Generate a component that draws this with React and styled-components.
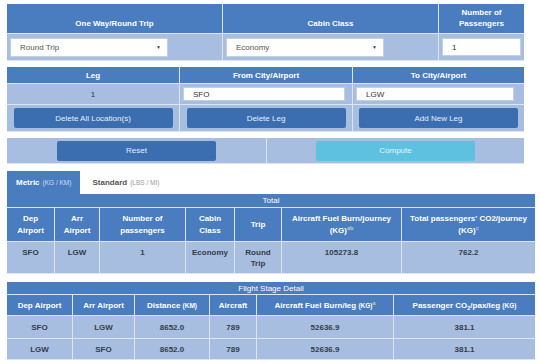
import React from 'react'
import styled, { createGlobalStyle } from 'styled-components'

const C = {
  head: '#4a7cc0',
  row: '#a8bee1',
  btn: '#3b6eb0',
  line: '#dbe5f3',
  cyan: '#5fc1e0',
  sup: '#b8e07c',
}

const GlobalStyle = createGlobalStyle`
  * { box-sizing: border-box; }
  body {
    margin: 0;
    background: #fff;
    font-family: "Liberation Sans", Arial, sans-serif;
    font-size: 8px;
    color: #333;
  }
`

const Page = styled.div`
  padding: 4px 0 0 7px;
`

const Panel = styled.div`
  width: ${({ $w }) => $w || 517}px;
  margin-bottom: ${({ $mb }) => $mb || 0}px;
`

const Row = styled.div`
  display: grid;
  grid-template-columns: ${({ $cols }) => $cols};
  height: ${({ $h }) => $h}px;
  background: ${({ $head }) => ($head ? C.head : C.row)};
  border-bottom: 1px solid ${C.line};
`

const Cell = styled.div`
  display: flex;
  align-items: ${({ $align }) => $align || 'center'};
  justify-content: ${({ $justify }) => $justify || 'center'};
  text-align: center;
  padding: ${({ $pad }) => $pad || '0 3px'};
  border-left: 1px solid ${C.line};
  line-height: ${({ $lh }) => $lh || 11}px;
  &:first-child { border-left: none; }
`

const HeadCell = styled(Cell)`
  color: #fff;
  font-weight: bold;
`

const DataCell = styled(Cell)`
  color: #333c4a;
  font-weight: bold;
`

const Bar = styled.div`
  height: ${({ $h }) => $h}px;
  background: ${C.head};
  color: #fff;
  text-align: center;
  line-height: ${({ $h }) => $h}px;
  border-bottom: 1px solid ${C.line};
`

const FakeSelect = styled.div`
  width: 158px;
  height: 19px;
  background: #fff;
  border: 1px solid #c4cfdf;
  display: flex;
  align-items: center;
  justify-content: space-between;
  padding: 0 6px 0 9px;
  color: #555;
`

const Caret = styled.span`
  font-size: 5px;
  color: #444;
`

const Field = styled.div`
  width: ${({ $w }) => $w}px;
  height: ${({ $h }) => $h || 18}px;
  background: #fff;
  border: 1px solid #c4cfdf;
  display: flex;
  align-items: center;
  padding-left: 9px;
  color: #333;
`

const Button = styled.div`
  width: 159px;
  height: 20px;
  border-radius: 2px;
  background: ${({ $cyan }) => ($cyan ? C.cyan : C.btn)};
  color: ${({ $cyan }) => ($cyan ? '#e4f5fb' : '#e8eef7')};
  display: flex;
  align-items: center;
  justify-content: center;
`

const Tabs = styled.div`
  display: flex;
  align-items: stretch;
  height: 23px;
  gap: 12px;
`

const Tab = styled.div`
  display: flex;
  align-items: center;
  padding: 0 9px;
  background: ${({ $active }) => ($active ? C.head : 'transparent')};
  color: ${({ $active }) => ($active ? '#fff' : '#555')};
  font-weight: bold;
  padding-left: ${({ $active }) => ($active ? 9 : 0)}px;
`

const Unit = styled.span`
  font-size: 6.5px;
  font-weight: normal;
  margin-left: 3px;
  color: ${({ $active }) => ($active ? '#d3def1' : '#999')};
`

const Small = styled.span`
  font-size: 6.5px;
`

const Sup = styled.sup`
  font-size: 5.5px;
  color: ${C.sup};
  vertical-align: 3px;
  line-height: 0;
`

const Sub = styled.sub`
  font-size: 5.5px;
  vertical-align: -2px;
  line-height: 0;
`

const TRIP_COLS = '215px 216px 86px'
const LEG_COLS = '172px 173px 172px'
const TOTAL_COLS = '47px 45px 86px 49px 47px 120px 134px'
const STAGE_COLS = '65px 62px 75px 47px 137px 142px'

const STAGES = [
  { dep: 'SFO', arr: 'LGW', dist: '8652.0', ac: '789', fuel: '52636.9', co2: '381.1' },
  { dep: 'LGW', arr: 'SFO', dist: '8652.0', ac: '789', fuel: '52636.9', co2: '381.1' },
]

const App = () => {
  return (
    <Page>
      <GlobalStyle />

      <Panel $mb={6}>
        <Row $head $cols={TRIP_COLS} $h={30}>
          <HeadCell $align="flex-end" $pad="0 3px 4px">One Way/Round Trip</HeadCell>
          <HeadCell $align="flex-end" $pad="0 3px 4px">Cabin Class</HeadCell>
          <HeadCell $align="flex-end" $pad="0 3px 4px">Number of<br />Passengers</HeadCell>
        </Row>
        <Row $cols={TRIP_COLS} $h={27}>
          <Cell $justify="flex-start">
            <FakeSelect>Round Trip<Caret>▼</Caret></FakeSelect>
          </Cell>
          <Cell $justify="flex-start">
            <FakeSelect>Economy<Caret>▼</Caret></FakeSelect>
          </Cell>
          <Cell $justify="flex-start">
            <Field $w={79}>1</Field>
          </Cell>
        </Row>
      </Panel>

      <Panel $mb={6}>
        <Row $head $cols={LEG_COLS} $h={17}>
          <HeadCell>Leg</HeadCell>
          <HeadCell>From City/Airport</HeadCell>
          <HeadCell>To City/Airport</HeadCell>
        </Row>
        <Row $cols={LEG_COLS} $h={21}>
          <Cell>1</Cell>
          <Cell $justify="flex-start"><Field $w={162} $h={14}>SFO</Field></Cell>
          <Cell $justify="flex-start"><Field $w={158} $h={14}>LGW</Field></Cell>
        </Row>
        <Row $cols={LEG_COLS} $h={27}>
          <Cell><Button>Delete All Location(s)</Button></Cell>
          <Cell><Button>Delete Leg</Button></Cell>
          <Cell><Button>Add New Leg</Button></Cell>
        </Row>
      </Panel>

      <Panel $mb={7}>
        <Row $cols="259px 258px" $h={26}>
          <Cell><Button>Reset</Button></Cell>
          <Cell><Button $cyan>Compute</Button></Cell>
        </Row>
      </Panel>

      <Panel $w={528} $mb={8}>
        <Tabs>
          <Tab $active>Metric<Unit $active>(KG / KM)</Unit></Tab>
          <Tab>Standard<Unit>(LBS / MI)</Unit></Tab>
        </Tabs>
        <Bar $h={14}>Total</Bar>
        <Row $head $cols={TOTAL_COLS} $h={34}>
          <HeadCell $lh={12}>Dep<br />Airport</HeadCell>
          <HeadCell $lh={12}>Arr<br />Airport</HeadCell>
          <HeadCell $lh={12}>Number of<br />passengers</HeadCell>
          <HeadCell $lh={12}>Cabin<br />Class</HeadCell>
          <HeadCell $lh={12}>Trip</HeadCell>
          <HeadCell $lh={12}>
            <span>Aircraft Fuel Burn/journey<br />(KG)<Sup>ab</Sup></span>
          </HeadCell>
          <HeadCell $lh={12}>
            <span>Total passengers' CO2/journey<br />(KG)<Sup>c</Sup></span>
          </HeadCell>
        </Row>
        <Row $cols={TOTAL_COLS} $h={32}>
          <DataCell $align="flex-start" $pad="5px 3px 0">SFO</DataCell>
          <DataCell $align="flex-start" $pad="5px 3px 0">LGW</DataCell>
          <DataCell $align="flex-start" $pad="5px 3px 0">1</DataCell>
          <DataCell $align="flex-start" $pad="5px 3px 0">Economy</DataCell>
          <DataCell $align="flex-start" $pad="5px 3px 0">Round<br />Trip</DataCell>
          <DataCell $align="flex-start" $pad="5px 3px 0">105273.8</DataCell>
          <DataCell $align="flex-start" $pad="5px 3px 0">762.2</DataCell>
        </Row>
      </Panel>

      <Panel $w={528}>
        <Bar $h={13}>Flight Stage Detail</Bar>
        <Row $head $cols={STAGE_COLS} $h={21}>
          <HeadCell>Dep Airport</HeadCell>
          <HeadCell>Arr Airport</HeadCell>
          <HeadCell><span>Distance <Small>(KM)</Small></span></HeadCell>
          <HeadCell>Aircraft</HeadCell>
          <HeadCell><span>Aircraft Fuel Burn/leg <Small>(KG)</Small><Sup>a</Sup></span></HeadCell>
          <HeadCell><span>Passenger CO<Sub>2</Sub>/pax/leg <Small>(KG)</Small></span></HeadCell>
        </Row>
        {STAGES.map((s, i) => (
          <Row key={i} $cols={STAGE_COLS} $h={i === 0 ? 23 : 21}>
            <DataCell>{s.dep}</DataCell>
            <DataCell>{s.arr}</DataCell>
            <DataCell>{s.dist}</DataCell>
            <DataCell>{s.ac}</DataCell>
            <DataCell>{s.fuel}</DataCell>
            <DataCell>{s.co2}</DataCell>
          </Row>
        ))}
      </Panel>
    </Page>
  )
}

export default App
